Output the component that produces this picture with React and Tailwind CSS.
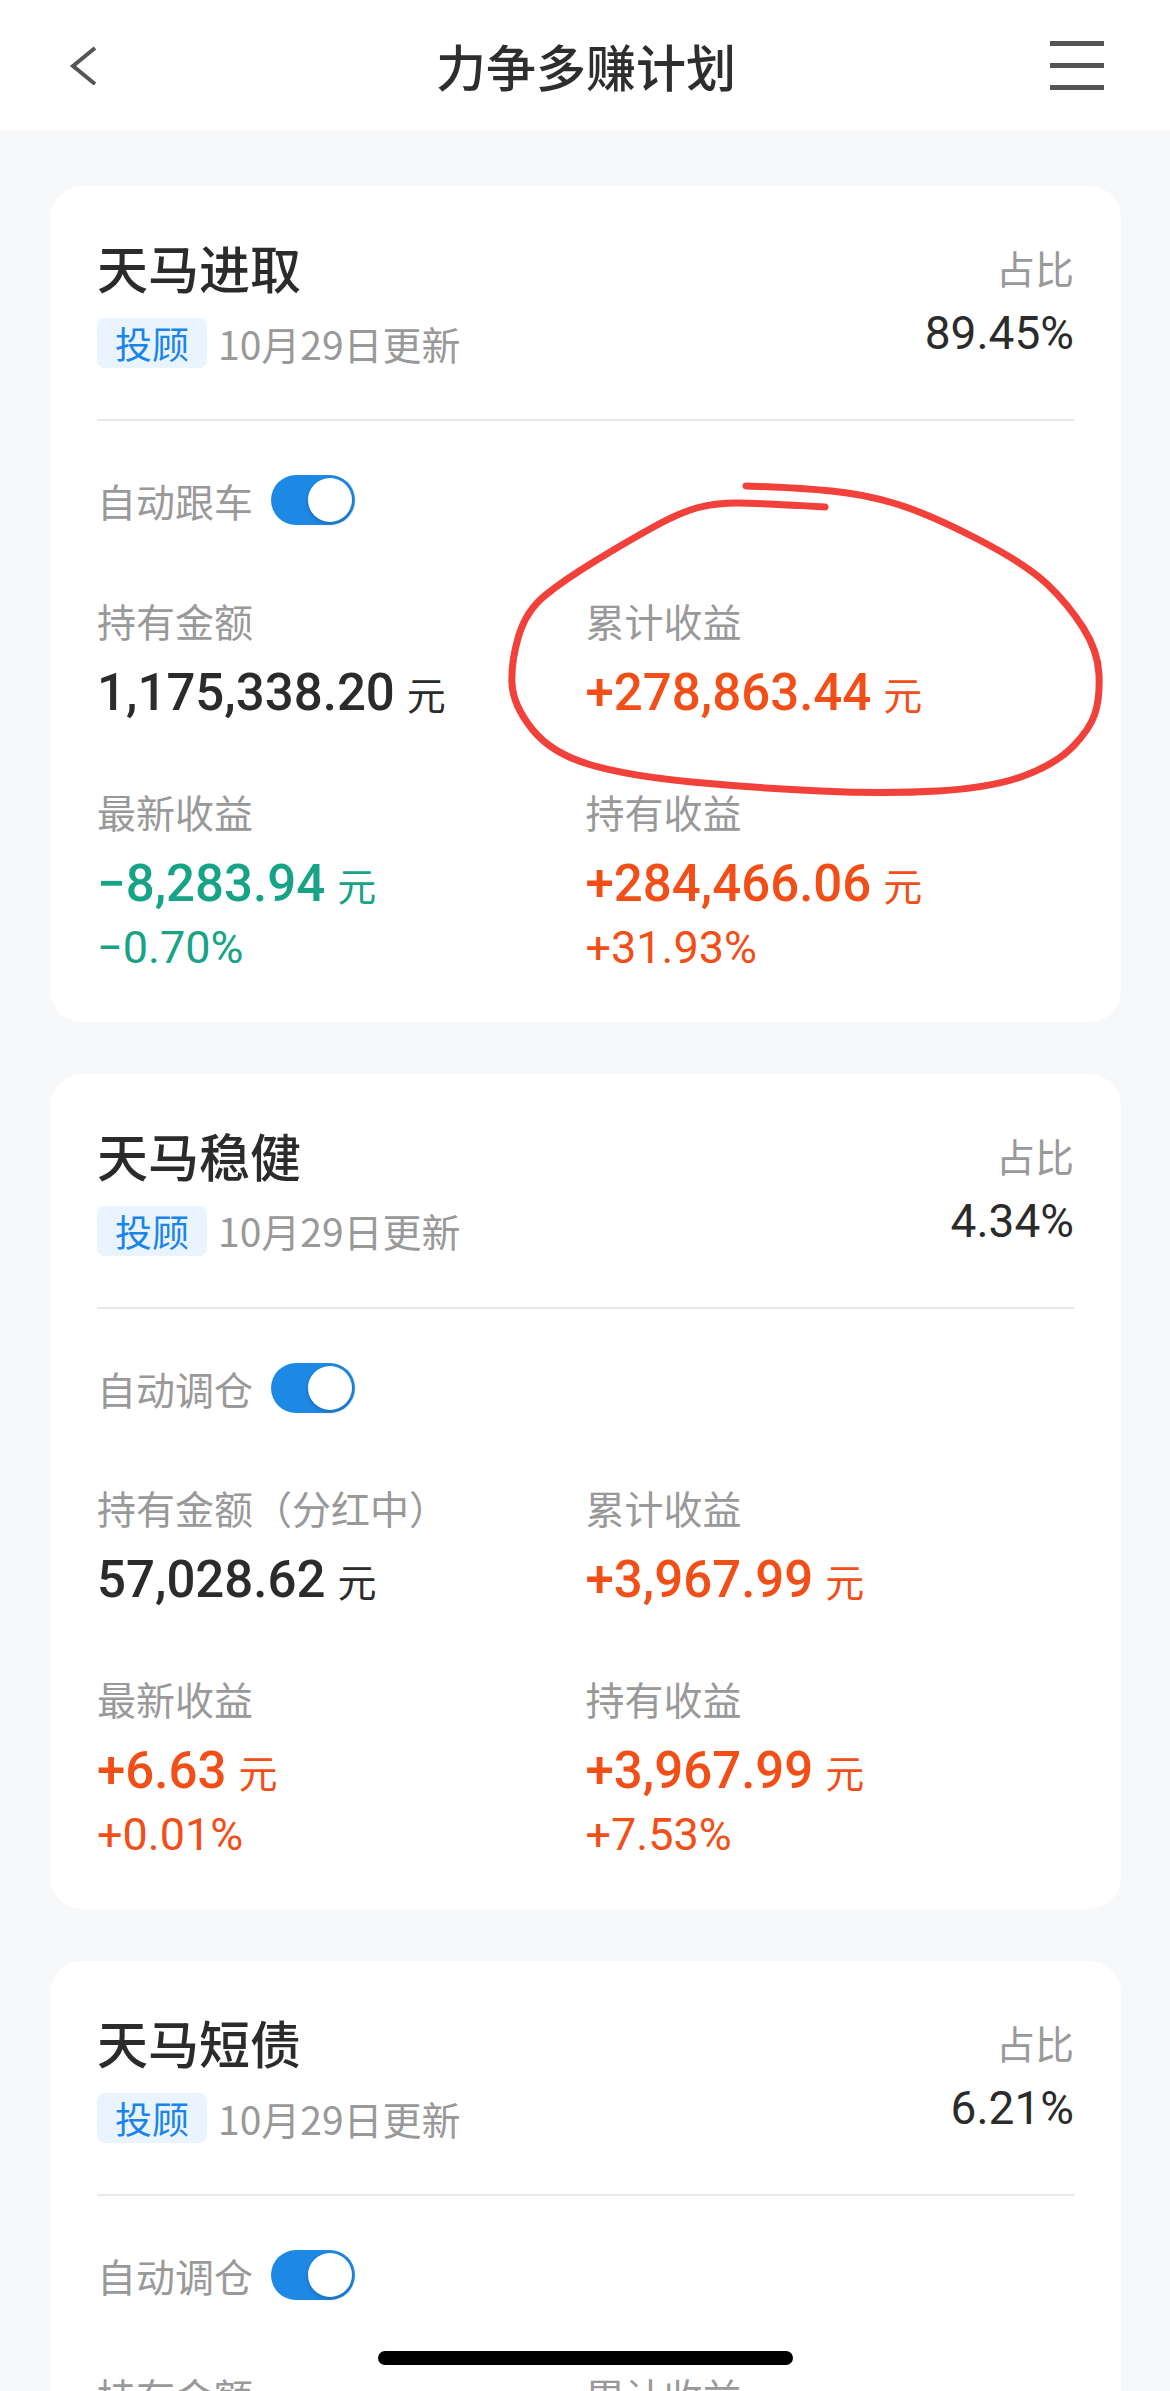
import React from 'react';

const CJK = { fontFamily: '"Noto Sans CJK SC", sans-serif' };
const NUM = { fontFamily: 'Roboto, "Noto Sans CJK SC", sans-serif' };

const plans = [
  {
    name: '天马进取',
    ratio: '89.45%',
    toggle: '自动跟车',
    cells: [
      { label: '持有金额', value: '1,175,338.20', tone: 'dark' },
      { label: '累计收益', value: '+278,863.44', tone: 'up' },
      { label: '最新收益', value: '−8,283.94', pct: '−0.70%', tone: 'down' },
      { label: '持有收益', value: '+284,466.06', pct: '+31.93%', tone: 'up' },
    ],
  },
  {
    name: '天马稳健',
    ratio: '4.34%',
    toggle: '自动调仓',
    cells: [
      { label: '持有金额（分红中）', value: '57,028.62', tone: 'dark' },
      { label: '累计收益', value: '+3,967.99', tone: 'up' },
      { label: '最新收益', value: '+6.63', pct: '+0.01%', tone: 'up' },
      { label: '持有收益', value: '+3,967.99', pct: '+7.53%', tone: 'up' },
    ],
  },
  {
    name: '天马短债',
    ratio: '6.21%',
    toggle: '自动调仓',
    cells: [
      { label: '持有金额', value: '', tone: 'dark' },
      { label: '累计收益', value: '', tone: 'up' },
    ],
  },
];

const toneClass = {
  dark: 'text-[#2b2b2b]',
  up: 'text-[#f24e17]',
  down: 'text-[#16a386]',
};

// hand drawn red loop around 累计收益
const loop = [
  [825, 507], [760, 503], [714, 503], [679, 513], [628, 541], [564, 580],
  [526, 611], [511, 662], [513, 705], [551, 753], [628, 776], [756, 788],
  [885, 794], [991, 788], [1056, 764], [1090, 729], [1100, 698], [1098, 651],
  [1068, 604], [1026, 564], [927, 513], [863, 494], [800, 488], [746, 486],
];

const loopPath = () => {
  let d = `M${loop[0][0]} ${loop[0][1]}`;
  for (let i = 1; i < loop.length - 1; i++) {
    const [x, y] = loop[i];
    const [nx, ny] = loop[i + 1];
    d += ` Q${x} ${y} ${(x + nx) / 2} ${(y + ny) / 2}`;
  }
  const last = loop[loop.length - 1];
  d += ` L${last[0]} ${last[1]}`;
  return d;
};

const Toggle = () => (
  <div className="relative w-[84px] h-[50px] rounded-full bg-[#1e88e5]">
    <div className="absolute right-[3px] top-[3px] w-[44px] h-[44px] rounded-full bg-white shadow-[0_2px_4px_rgba(0,0,0,0.2)]" />
  </div>
);

const Cell = ({ cell }) => (
  <div className="flex flex-col">
    <div className="h-[50px] leading-[50px] text-[39px] text-[#999999]" style={CJK}>
      {cell.label}
    </div>
    {cell.value && (
      <div className={`mt-[18px] h-[60px] flex items-baseline ${toneClass[cell.tone]}`}>
        <span className="text-[51px] leading-[60px] font-medium" style={NUM}>{cell.value}</span>
        <span className="ml-[12px] text-[39px]" style={CJK}>元</span>
      </div>
    )}
    {cell.pct && (
      <div className={`mt-[9px] h-[50px] leading-[50px] text-[45px] ${toneClass[cell.tone]}`} style={NUM}>
        {cell.pct}
      </div>
    )}
  </div>
);

const PlanCard = ({ plan }) => (
  <div className="w-[1071px] rounded-[32px] bg-white px-[47px] pt-[51px] pb-[49px]">
    <div className="flex justify-between">
      <div className="flex flex-col">
        <div className="h-[60px] leading-[60px] text-[51px] font-medium text-[#2b2b2b]" style={CJK}>
          {plan.name}
        </div>
        <div className="mt-[21px] flex items-center h-[50px]">
          <span className="h-[50px] leading-[50px] px-[18px] rounded-[8px] bg-[#e9f4fe] text-[#1b84e8] text-[37px]" style={CJK}>
            投顾
          </span>
          <span className="ml-[11px] text-[39px] text-[#999999]" style={CJK}>10月29日更新</span>
        </div>
      </div>
      <div className="flex flex-col items-end">
        <div className="h-[60px] leading-[60px] text-[39px] text-[#999999]" style={CJK}>占比</div>
        <div className="mt-[11px] h-[50px] leading-[50px] text-[46px] text-[#2b2b2b]" style={NUM}>{plan.ratio}</div>
      </div>
    </div>
    <div className="mt-[51px] h-[2px] bg-[#e9e9e9]" />
    <div className="mt-[50px] flex items-center gap-[18px]">
      <span className="text-[39px] text-[#999999]" style={CJK}>{plan.toggle}</span>
      <Toggle />
    </div>
    <div className="mt-[65px] grid grid-cols-2 gap-y-[63px]">
      {plan.cells.map((c, i) => (
        <Cell key={i} cell={c} />
      ))}
    </div>
  </div>
);

export default function App() {
  return (
    <div className="relative w-[1170px] h-[2391px] overflow-hidden bg-[#f7f8fa]">
      <div className="h-[131px] bg-white flex items-center pl-[68px] pr-[66px]">
        <div className="w-[54px] flex items-center">
          <svg width="32" height="40" viewBox="0 0 32 40">
            <polyline points="27,2 5,20 27,38" fill="none" stroke="#555555" strokeWidth="4" strokeLinejoin="miter" />
          </svg>
        </div>
        <div className="flex-1 text-center text-[50px] font-medium text-[#2e2e2e]" style={CJK}>
          力争多赚计划
        </div>
        <div className="w-[54px] flex flex-col gap-[17px]">
          <div className="h-[5px] bg-[#555555]" />
          <div className="h-[5px] bg-[#555555]" />
          <div className="h-[5px] bg-[#555555]" />
        </div>
      </div>

      <div className="pl-[50px] pt-[55px] flex flex-col gap-[52px]">
        {plans.map((p) => (
          <PlanCard key={p.name} plan={p} />
        ))}
      </div>

      <svg className="absolute left-0 top-0 pointer-events-none" width="1170" height="900" viewBox="0 0 1170 900">
        <path d={loopPath()} fill="none" stroke="#f2413a" strokeWidth="7" strokeLinecap="round" strokeLinejoin="round" />
      </svg>

      <div className="absolute left-[378px] bottom-[26px] w-[415px] h-[14px] rounded-full bg-black" />
    </div>
  );
}
